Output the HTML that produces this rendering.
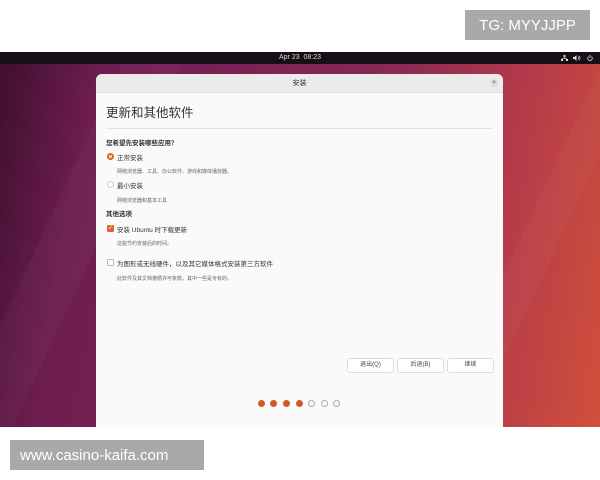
<!DOCTYPE html>
<html><head><meta charset="utf-8"><style>
*{margin:0;padding:0;box-sizing:border-box}
body{width:600px;height:480px;background:#fff;position:relative;overflow:hidden;font-family:"Liberation Sans","Noto Sans CJK SC",sans-serif;}
.wm{position:absolute;background:#a9a9a9;color:#fff;font-size:15px;display:flex;align-items:center;justify-content:center}
.desk{position:absolute;left:0;top:52px;width:600px;height:375px;background:linear-gradient(100deg,#3e0f2e 0%,#6d1d4f 15%,#7a2255 35%,#8a2a55 60%,#b53a4a 80%,#d0503b 100%);overflow:hidden}
.streak{position:absolute;background:rgba(255,255,255,0.03);transform:skewX(-25deg)}
.bar{position:absolute;left:0;top:0;width:600px;height:12px;background:#151015;color:#ddd;font-size:7px;text-align:center;line-height:12px}
.dlg{position:absolute;left:96px;top:22px;width:407px;height:353px;background:#fafafa;border-radius:6px 6px 0 0;overflow:hidden}
.tt{height:19px;background:#ebebeb;border-bottom:1px solid #ddd;text-align:center;font-size:7px;line-height:19px;color:#333;position:relative}
.x{position:absolute;right:5px;top:5px;width:8px;height:8px;border-radius:50%;background:#ddd;font-size:6px;line-height:8px;color:#444}
h1{font-size:12.5px;font-weight:normal;color:#333;position:absolute;left:10px;top:28px}
.hr{position:absolute;left:10px;right:10px;top:54px;border-top:1px solid #e4e4e4}
.t{position:absolute;font-size:6.5px;color:#333;white-space:nowrap}
.s{position:absolute;font-size:5px;color:#666;white-space:nowrap}
.b{font-weight:bold}
.btn{position:absolute;top:284px;width:47px;height:15px;border:1px solid #ddd;border-radius:3px;background:#fff;font-size:6px;text-align:center;line-height:13px;color:#444}
.dot{position:absolute;top:326px;width:7px;height:7px;border-radius:50%}
</style></head><body>
<div class="wm" style="left:465px;top:10px;width:125px;height:30px">TG: MYYJJPP</div>
<div class="desk">
<div class="streak" style="left:40px;top:0;width:60px;height:375px"></div>
<div class="streak" style="left:520px;top:0;width:40px;height:375px"></div>
<div class="bar">Apr 23&nbsp; 08:23
<svg style="position:absolute;right:32px;top:3px" width="7" height="6" viewBox="0 0 7 6"><rect x="2.5" y="0" width="2" height="2" fill="#ddd"/><rect x="0" y="4" width="2" height="2" fill="#ddd"/><rect x="5" y="4" width="2" height="2" fill="#ddd"/><path d="M3.5 2V3M1 4L3.5 3L6 4" stroke="#ddd" stroke-width=".7" fill="none"/></svg>
<svg style="position:absolute;right:19px;top:3px" width="8" height="6" viewBox="0 0 8 6"><path d="M0 2H1.5L3.5 0V6L1.5 4H0Z" fill="#ddd"/><path d="M5 1.5Q6 3 5 4.5M6.3 .8Q7.8 3 6.3 5.2" stroke="#ddd" stroke-width=".7" fill="none"/></svg>
<svg style="position:absolute;right:7px;top:3px" width="6" height="6" viewBox="0 0 6 6"><path d="M1.5 1.5A2.3 2.3 0 1 0 4.5 1.5" stroke="#ddd" stroke-width=".8" fill="none"/><path d="M3 0V3" stroke="#ddd" stroke-width=".8"/></svg>
</div>
<div class="dlg">
<div class="tt">安装<div class="x">×</div></div>
<h1>更新和其他软件</h1>
<div class="hr"></div>
<div class="t b" style="left:10px;top:63px">您希望先安装哪些应用？</div>
<div style="position:absolute;left:11px;top:79px;width:7px;height:7px;border-radius:50%;background:#e0602f;border:2px solid #e0602f;box-shadow:inset 0 0 0 1px #fff"></div>
<div class="t" style="left:21px;top:78px">正常安装</div>
<div class="s" style="left:21px;top:94px">网络浏览器、工具、办公软件、游戏和媒体播放器。</div>
<div style="position:absolute;left:11px;top:107px;width:7px;height:7px;border-radius:50%;border:1px solid #ccc;background:#fff"></div>
<div class="t" style="left:21px;top:106px">最小安装</div>
<div class="s" style="left:21px;top:123px">网络浏览器和基本工具</div>
<div class="t b" style="left:10px;top:134px">其他选项</div>
<div style="position:absolute;left:11px;top:151px;width:7px;height:7px;border-radius:1.5px;background:#e0602f;color:#fff;font-size:6px;line-height:7px;text-align:center">✓</div>
<div class="t" style="left:21px;top:150px">安装 Ubuntu 时下载更新</div>
<div class="s" style="left:21px;top:166px">这能节约安装后的时间。</div>
<div style="position:absolute;left:11px;top:185px;width:7px;height:7px;border-radius:1.5px;border:1px solid #bbb;background:#fff"></div>
<div class="t" style="left:21px;top:184px">为图形或无线硬件，以及其它媒体格式安装第三方软件</div>
<div class="s" style="left:21px;top:201px">此软件及其文档遵循许可条款。其中一些是专有的。</div>
<div class="btn" style="left:251px">退出(Q)</div>
<div class="btn" style="left:301px">后退(B)</div>
<div class="btn" style="left:351px">继续</div>
<div class="dot" style="left:162px;background:#d0582b"></div>
<div class="dot" style="left:174px;background:#d0582b"></div>
<div class="dot" style="left:187px;background:#d0582b"></div>
<div class="dot" style="left:200px;background:#d0582b"></div>
<div class="dot" style="left:212px;border:1px solid #aaa"></div>
<div class="dot" style="left:225px;border:1px solid #aaa"></div>
<div class="dot" style="left:237px;border:1px solid #aaa"></div>
</div>
</div>
<div class="wm" style="left:10px;top:440px;width:194px;height:30px;font-size:15px;justify-content:flex-start;padding-left:10px">www.casino-kaifa.com</div>
</body></html>
